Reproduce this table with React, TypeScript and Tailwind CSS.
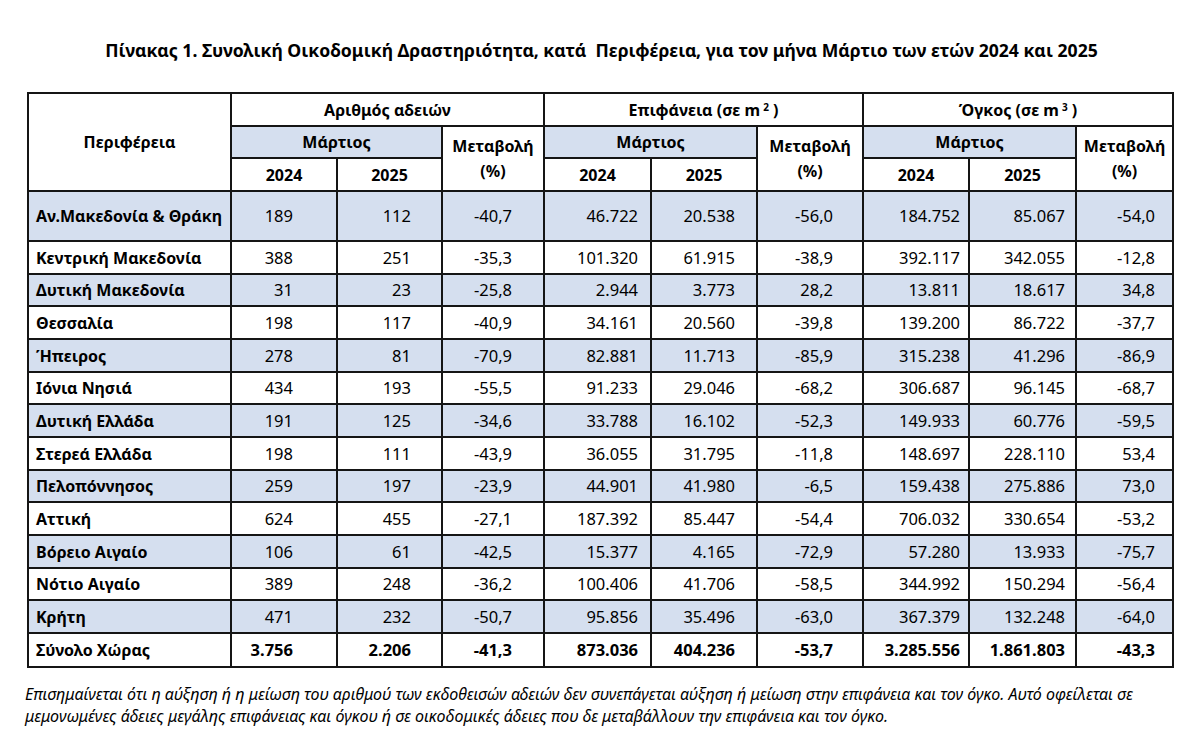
import React from "react";

const rows: string[][] = [
  ["Αν.Μακεδονία & Θράκη", "189", "112", "-40,7", "46.722", "20.538", "-56,0", "184.752", "85.067", "-54,0"],
  ["Κεντρική Μακεδονία", "388", "251", "-35,3", "101.320", "61.915", "-38,9", "392.117", "342.055", "-12,8"],
  ["Δυτική Μακεδονία", "31", "23", "-25,8", "2.944", "3.773", "28,2", "13.811", "18.617", "34,8"],
  ["Θεσσαλία", "198", "117", "-40,9", "34.161", "20.560", "-39,8", "139.200", "86.722", "-37,7"],
  ["Ήπειρος", "278", "81", "-70,9", "82.881", "11.713", "-85,9", "315.238", "41.296", "-86,9"],
  ["Ιόνια Νησιά", "434", "193", "-55,5", "91.233", "29.046", "-68,2", "306.687", "96.145", "-68,7"],
  ["Δυτική Ελλάδα", "191", "125", "-34,6", "33.788", "16.102", "-52,3", "149.933", "60.776", "-59,5"],
  ["Στερεά Ελλάδα", "198", "111", "-43,9", "36.055", "31.795", "-11,8", "148.697", "228.110", "53,4"],
  ["Πελοπόννησος", "259", "197", "-23,9", "44.901", "41.980", "-6,5", "159.438", "275.886", "73,0"],
  ["Αττική", "624", "455", "-27,1", "187.392", "85.447", "-54,4", "706.032", "330.654", "-53,2"],
  ["Βόρειο Αιγαίο", "106", "61", "-42,5", "15.377", "4.165", "-72,9", "57.280", "13.933", "-75,7"],
  ["Νότιο Αιγαίο", "389", "248", "-36,2", "100.406", "41.706", "-58,5", "344.992", "150.294", "-56,4"],
  ["Κρήτη", "471", "232", "-50,7", "95.856", "35.496", "-63,0", "367.379", "132.248", "-64,0"],
];
const total = ["Σύνολο Χώρας", "3.756", "2.206", "-41,3", "873.036", "404.236", "-53,7", "3.285.556", "1.861.803", "-43,3"];

const pads = ["pr-[43px]", "pr-[30px]", "pr-[31px]", "pr-[12px]", "pr-[21px]", "pr-[29px]", "pr-[8px]", "pr-[10px]", "pr-[17px]"];
const heights = ["h-[50px]", "h-[33px]", "h-[32px]", "h-[33px]", "h-[33px]", "h-[32px]", "h-[33px]", "h-[33px]", "h-[32px]", "h-[33px]", "h-[33px]", "h-[32px]", "h-[33px]"];

const B = "border-2 border-[#151515]";
const BLUE = "bg-[#d5dfef]";

export default function App() {
  return (
    <div
      className="w-[1203px] h-[742px] bg-white text-black overflow-hidden"
      style={{ fontFamily: '"Noto Sans", "Open Sans", sans-serif' }}
    >
      <h1 className="pt-[38px] text-center text-[17.6px] leading-[24px] font-bold">
        Πίνακας 1. Συνολική Οικοδομική Δραστηριότητα, κατά&nbsp; Περιφέρεια, για τον μήνα Μάρτιο των ετών 2024 και 2025
      </h1>
      <table className="ml-[27px] mt-[30px] w-[1145px] table-fixed border-collapse text-[16px] leading-[20px]">
        <colgroup>
          <col className="w-[203px]" />
          <col className="w-[106px]" />
          <col className="w-[105px]" />
          <col className="w-[102px]" />
          <col className="w-[107px]" />
          <col className="w-[106px]" />
          <col className="w-[106px]" />
          <col className="w-[106px]" />
          <col className="w-[107px]" />
          <col className="w-[97px]" />
        </colgroup>
        <thead>
          <tr className="h-[33px]">
            <th rowSpan={3} className={`${B} font-bold text-center`}>
              Περιφέρεια
            </th>
            <th colSpan={3} className={`${B} font-bold text-center`}>
              Αριθμός αδειών
            </th>
            <th colSpan={3} className={`${B} font-bold text-center`}>
              Επιφάνεια (σε m<sup className="text-[10px] relative -top-[5px] ml-[3px]">2</sup> )
            </th>
            <th colSpan={3} className={`${B} font-bold text-center`}>
              Όγκος (σε m<sup className="text-[10px] relative -top-[5px] ml-[3px]">3</sup> )
            </th>
          </tr>
          <tr className="h-[32px]">
            <th colSpan={2} className={`${B} ${BLUE} font-bold text-center`}>Μάρτιος</th>
            <th rowSpan={2} className={`${B} font-bold text-center leading-[25px]`}>
              Μεταβολή
              <br />
              (%)
            </th>
            <th colSpan={2} className={`${B} ${BLUE} font-bold text-center`}>Μάρτιος</th>
            <th rowSpan={2} className={`${B} font-bold text-center leading-[25px]`}>
              Μεταβολή
              <br />
              (%)
            </th>
            <th colSpan={2} className={`${B} ${BLUE} font-bold text-center`}>Μάρτιος</th>
            <th rowSpan={2} className={`${B} font-bold text-center leading-[25px]`}>
              Μεταβολή
              <br />
              (%)
            </th>
          </tr>
          <tr className="h-[33px]">
            <th className={`${B} font-bold text-center`}>2024</th>
            <th className={`${B} font-bold text-center`}>2025</th>
            <th className={`${B} font-bold text-center`}>2024</th>
            <th className={`${B} font-bold text-center`}>2025</th>
            <th className={`${B} font-bold text-center`}>2024</th>
            <th className={`${B} font-bold text-center`}>2025</th>
          </tr>
        </thead>
        <tbody>
          {rows.map((r, i) => (
            <tr key={r[0]} className={`${heights[i]} ${i % 2 === 0 ? BLUE : "bg-white"}`}>
              <td className={`${B} pl-[7px] font-bold whitespace-nowrap`}>{r[0]}</td>
              {r.slice(1).map((v, j) => (
                <td key={j} className={`${B} text-right text-[16.5px] ${pads[j]}`}>
                  {v}
                </td>
              ))}
            </tr>
          ))}
          <tr className="h-[34px] bg-white">
            <td className={`${B} pl-[7px] font-bold whitespace-nowrap`}>{total[0]}</td>
            {total.slice(1).map((v, j) => (
              <td key={j} className={`${B} text-right text-[16.5px] font-bold ${pads[j]}`}>
                {v}
              </td>
            ))}
          </tr>
        </tbody>
      </table>
      <p className="mt-[15px] ml-[25px] text-[16px] leading-[22px] italic whitespace-nowrap">
        Επισημαίνεται ότι η αύξηση ή η μείωση του αριθμού των εκδοθεισών αδειών δεν συνεπάγεται αύξηση ή μείωση στην επιφάνεια και τον όγκο. Αυτό οφείλεται σε
        <br />
        μεμονωμένες άδειες μεγάλης επιφάνειας και όγκου ή σε οικοδομικές άδειες που δε μεταβάλλουν την επιφάνεια και τον όγκο.
      </p>
    </div>
  );
}
